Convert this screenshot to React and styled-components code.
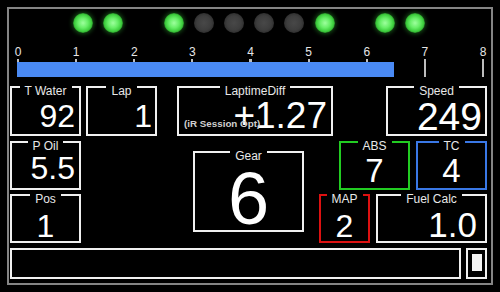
import React from 'react';
import styled, { createGlobalStyle } from 'styled-components';

const Global = createGlobalStyle`
  html, body { margin: 0; padding: 0; background: #000; }
  body { font-family: "Liberation Sans", Arial, sans-serif; color: #fff; }
`;

const Frame = styled.div`
  box-sizing: border-box;
  margin: 7px;
  width: 486px;
  height: 278px;
  border: 2px solid #858585;
  padding: 4px 4px 4px 1px;
  display: flex;
  flex-direction: column;
`;

const LedRow = styled.div`
  display: flex;
  gap: 10.2px;
  margin-left: 63px;
  height: 20px;
`;

const Led = styled.div`
  width: 20px;
  height: 20px;
  border-radius: 50%;
  background: ${p =>
    p.$state === 'on'
      ? 'radial-gradient(circle, #9dff9d 0%, #66ee66 35%, #3ccc3c 60%, rgba(40,150,40,0.55) 80%, rgba(20,80,20,0) 100%)'
      : p.$state === 'off'
      ? 'radial-gradient(circle, #484848 0%, #3d3d3d 50%, #2c2c2c 75%, rgba(30,30,30,0.3) 92%, rgba(0,0,0,0) 100%)'
      : 'transparent'};
  box-shadow: ${p => (p.$state === 'on' ? '0 0 4px 1px rgba(40,140,40,0.55)' : 'none')};
`;

const ScaleLabels = styled.div`
  display: flex;
  justify-content: space-between;
  width: 481px;
  margin-top: 12px;
  height: 14px;
`;

const ScaleNum = styled.span`
  width: 16px;
  text-align: center;
  font-size: 12px;
  line-height: 14px;
  color: #e6e6e6;
`;

const Track = styled.div`
  box-sizing: border-box;
  margin-left: 7px;
  width: 467px;
  height: 18px;
  padding-top: 3px;
  background: repeating-linear-gradient(to right, #bdbdbd 0 2px, transparent 2px 58.125px);
`;

const BarFill = styled.div`
  height: 15px;
  background: #4a8af4;
`;

const Grid = styled.div`
  margin-top: 9px;
  display: grid;
  grid-template-columns: 71px 5px 71px 20px 16px 111px 15px 14px 6px 31px 6px 10px 24px 6px 45px 5px 21px;
  grid-template-rows: 50px 5px 10px 39px 4px 38px 11px 5px 31px;
`;

const Box = styled.div`
  grid-column: ${p => p.$col};
  grid-row: ${p => p.$row};
  position: relative;
  display: flex;
  flex-direction: column;
  min-width: 0;
  border: 2px solid ${p => p.$color};
  border-top: none;
`;

const Head = styled.div`
  display: flex;
  align-items: flex-start;
`;

const Seg = styled.div`
  flex: 1;
  border-top: 2px solid ${p => p.$color};
`;

const Label = styled.span`
  padding: 0 5px;
  margin-top: -1px;
  font-size: 12px;
  line-height: 12px;
  color: #e8e8e8;
  white-space: nowrap;
`;

const Value = styled.div`
  flex: 1;
  display: flex;
  align-items: flex-end;
  justify-content: ${p => (p.$align === 'center' ? 'center' : 'flex-end')};
  padding-right: ${p => p.$pr}px;
  margin-bottom: ${p => p.$mb}px;
  font-size: ${p => p.$fs}px;
  line-height: 1;
  color: #fff;
  white-space: nowrap;
`;

const Sub = styled.span`
  position: absolute;
  left: 5px;
  bottom: 5px;
  font-size: 9.8px;
  line-height: 10px;
  font-weight: bold;
  color: #d0d0d0;
  white-space: nowrap;
`;

const Bar = styled.div`
  grid-column: ${p => p.$col};
  grid-row: ${p => p.$row};
  border: 2px solid #f0f0f0;
  display: flex;
  align-items: center;
  justify-content: center;
`;

const Block = styled.div`
  width: 10px;
  height: 17px;
  margin-bottom: 2px;
  background: #f4f4f4;
`;

const LEDS = ['on', 'on', 'none', 'on', 'off', 'off', 'off', 'off', 'on', 'none', 'on', 'on'];

const WHITE = '#f0f0f0';

const WIDGETS = [
  { label: 'T Water', value: '92', col: '1 / 2', row: '1 / 2', fs: 32, pr: 4, mb: 2 },
  { label: 'Lap', value: '1', col: '3 / 4', row: '1 / 2', fs: 32, pr: 3, mb: 2 },
  { label: 'LaptimeDiff', value: '+1.27', col: '5 / 9', row: '1 / 2', fs: 37, pr: 4, mb: 2, sub: '(iR Session Opt)' },
  { label: 'Speed', value: '249', col: '13 / 18', row: '1 / 2', fs: 39, pr: 3, mb: 1 },
  { label: 'P Oil', value: '5.5', col: '1 / 2', row: '3 / 5', fs: 32, pr: 4, mb: 5 },
  { label: 'ABS', value: '7', col: '10 / 14', row: '3 / 5', fs: 33, align: 'center', pr: 0, mb: 1, color: '#22cc22' },
  { label: 'TC', value: '4', col: '15 / 18', row: '3 / 5', fs: 33, align: 'center', pr: 0, mb: 1, color: '#3a78e6' },
  { label: 'Gear', value: '6', col: '6 / 7', row: '4 / 7', fs: 74, align: 'center', pr: 0, mb: -2 },
  { label: 'Pos', value: '1', col: '1 / 2', row: '6 / 8', fs: 32, align: 'center', pr: 0, mb: -1 },
  { label: 'MAP', value: '2', col: '8 / 11', row: '6 / 8', fs: 32, align: 'center', pr: 0, mb: -1, color: '#dd1111' },
  { label: 'Fuel Calc', value: '1.0', col: '12 / 18', row: '6 / 8', fs: 35, pr: 8, mb: -1 },
];

function Widget({ w }) {
  const color = w.color || WHITE;
  return (
    <Box $col={w.col} $row={w.row} $color={color}>
      <Head>
        <Seg $color={color} />
        <Label>{w.label}</Label>
        <Seg $color={color} />
      </Head>
      <Value $align={w.align} $pr={w.pr} $mb={w.mb} $fs={w.fs}>{w.value}</Value>
      {w.sub && <Sub>{w.sub}</Sub>}
    </Box>
  );
}

export default function App() {
  const rpm = 6.485;
  const maxRpm = 8;
  return (
    <>
      <Global />
      <Frame>
        <LedRow>
          {LEDS.map((s, i) => (
            <Led key={i} $state={s} />
          ))}
        </LedRow>
        <ScaleLabels>
          {[0, 1, 2, 3, 4, 5, 6, 7, 8].map(n => (
            <ScaleNum key={n}>{n}</ScaleNum>
          ))}
        </ScaleLabels>
        <Track>
          <BarFill style={{ width: `${(rpm / maxRpm) * 465}px` }} />
        </Track>
        <Grid>
          {WIDGETS.map(w => (
            <Widget key={w.label} w={w} />
          ))}
          <Bar $col="1 / 16" $row="9 / 10" />
          <Bar $col="17 / 18" $row="9 / 10">
            <Block />
          </Bar>
        </Grid>
      </Frame>
    </>
  );
}
